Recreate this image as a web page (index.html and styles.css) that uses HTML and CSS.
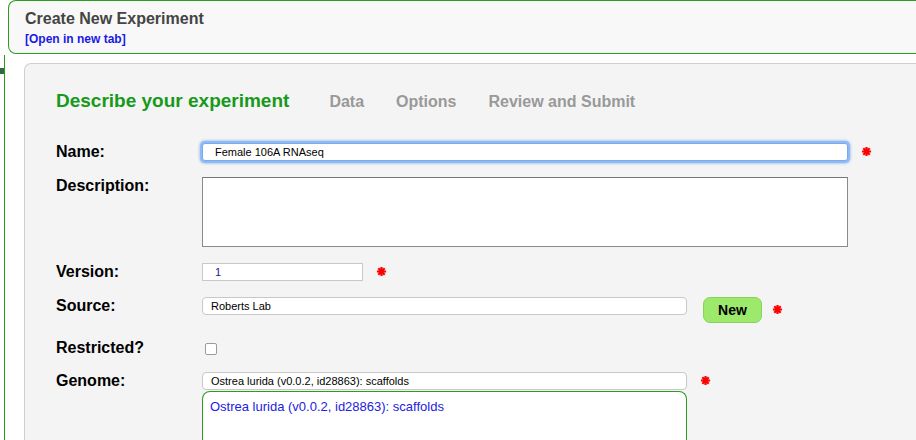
FILE: index.html
```html
<!DOCTYPE html>
<html lang="en">
<head>
    <meta charset="UTF-8">
    <meta name="viewport" content="width=device-width, initial-scale=1.0">
    <title>Create New Experiment</title>
    <link rel="stylesheet" href="styles.css">
</head>
<body>
    <div class="cabecalho">
        <h1>Create New Experiment</h1>
        <a href="#" class="cabecalho_link">[Open in new tab]</a>
    </div>

    <div class="moldura">
        <span class="moldura_marca"></span>
        <div class="painel">
            <div class="passos">
                <span class="passos_ativo">Describe your experiment</span>
                <span class="passos_item">Data</span>
                <span class="passos_item">Options</span>
                <span class="passos_item">Review and Submit</span>
            </div>

            <div class="campo">
                <label class="campo_rotulo">Name:</label>
                <input type="text" class="campo_texto campo_texto-foco campo_texto-largo recuo" value="Female 106A RNAseq">
                <svg class="obrigatorio" viewBox="0 0 12 12"><path d="M6 1v10M1 6h10M2.5 2.5l7 7M9.5 2.5l-7 7"/></svg>
            </div>
            <div class="campo campo-area">
                <label class="campo_rotulo">Description:</label>
                <textarea class="campo_area"></textarea>
            </div>
            <div class="campo">
                <label class="campo_rotulo">Version:</label>
                <input type="text" class="campo_texto campo_texto-curto recuo campo_texto-azul" value="1">
                <svg class="obrigatorio" viewBox="0 0 12 12"><path d="M6 1v10M1 6h10M2.5 2.5l7 7M9.5 2.5l-7 7"/></svg>
            </div>
            <div class="campo campo-botao">
                <label class="campo_rotulo">Source:</label>
                <input type="text" class="campo_texto campo_texto-medio redondo" value="Roberts Lab">
                <button class="botao_novo">New</button>
                <svg class="obrigatorio obrigatorio-perto" viewBox="0 0 12 12"><path d="M6 1v10M1 6h10M2.5 2.5l7 7M9.5 2.5l-7 7"/></svg>
            </div>
            <div class="campo campo-check">
                <label class="campo_rotulo">Restricted?</label>
                <span class="caixa"></span>
            </div>
            <div class="campo campo-genoma">
                <label class="campo_rotulo">Genome:</label>
                <div class="genoma">
                    <div class="genoma_linha">
                        <input type="text" class="campo_texto campo_texto-medio redondo" value="Ostrea lurida (v0.0.2, id28863): scaffolds">
                        <svg class="obrigatorio" viewBox="0 0 12 12"><path d="M6 1v10M1 6h10M2.5 2.5l7 7M9.5 2.5l-7 7"/></svg>
                    </div>
                    <div class="genoma_lista">Ostrea lurida (v0.0.2, id28863): scaffolds</div>
                </div>
            </div>
        </div>
    </div>
</body>
</html>
```

FILE: styles.css
```css
*{border: 0;margin: 0;padding: 0;box-sizing: border-box;}
html, body{
    width: 916px;
    height: 440px;
    overflow: hidden;
}
body{
    background: #fff;
    font-family: 'Liberation Sans', Arial, sans-serif;
}
.cabecalho{
    margin-left: 8px;
    height: 54px;
    border: 1px solid #2a9d1f;
    border-right: 0;
    border-radius: 8px 0 0 8px;
    background: #f8f8f8;
    padding: 8px 0 0 16px;
}
h1{
    font-size: 16px;
    line-height: 20px;
    color: #444;
    font-weight: bold;
}
.cabecalho_link{
    display: block;
    margin-top: 3px;
    font-size: 12px;
    line-height: 14px;
    font-weight: bold;
    color: #1a1ae6;
    text-decoration: none;
}
.moldura{
    position: relative;
    margin-top: 1px;
    margin-left: 4px;
    border-left: 1px solid #2a9d1f;
    height: 385px;
    padding: 8px 0 0 19px;
}
.moldura_marca{
    position: absolute;
    left: -5px;
    top: 13px;
    width: 4px;
    height: 6px;
    background: #2e6a3a;
}
.painel{
    height: 377px;
    border: 1px solid #cfcfcf;
    border-right: 0;
    border-bottom: 0;
    border-radius: 7px 0 0 0;
    background: #f4f4f4;
    padding: 26px 0 0 31px;
}
.passos{
    display: flex;
    align-items: baseline;
    height: 22px;
    margin-bottom: 31px;
}
.passos_ativo{
    font-size: 19px;
    font-weight: bold;
    color: #17991a;
    margin-right: 40px;
}
.passos_item{
    font-size: 16px;
    font-weight: bold;
    color: #999;
    margin-right: 32px;
}
.campo{
    display: flex;
    align-items: center;
    height: 18px;
    margin-bottom: 16px;
}
.campo-area{
    height: 70px;
    align-items: flex-start;
}
.campo-botao{
    height: 26px;
    align-items: flex-start;
}
.campo-check{
    margin-bottom: 15px;
}
.campo-genoma{
    align-items: flex-start;
    height: auto;
    margin-bottom: 0;
}
.campo_rotulo{
    width: 146px;
    flex: none;
    font-size: 16px;
    line-height: 18px;
    font-weight: bold;
    color: #000;
}
.campo_texto{
    height: 18px;
    border: 1px solid #c8c8c8;
    background: #fff;
    font-family: 'Liberation Sans', Arial, sans-serif;
    font-size: 11px;
    color: #000;
    padding: 0 8px;
    outline: 0;
}
.campo_texto-foco{
    border-color: #7aaaee;
    border-radius: 3px;
    box-shadow: 0 0 0 2px #8fbaf3, 0 0 2px 3px rgba(120, 170, 240, 0.5);
}
.campo_texto-largo{width: 646px;}
.campo_texto-curto{width: 161px;}
.campo_texto-medio{width: 485px;}
.campo_texto-azul{color: #1a1a80;}
.recuo{padding-left: 12px;}
.redondo{border-radius: 4px;}
.campo_area{
    width: 646px;
    height: 70px;
    border: 1px solid #8a8a8a;
    border-top-color: #777;
    background: #fff;
    resize: none;
    outline: 0;
}
.obrigatorio{
    width: 11px;
    height: 11px;
    margin-left: 13px;
    margin-top: -2px;
    stroke: #f00;
    stroke-width: 2.4;
    fill: none;
}
.campo-botao .obrigatorio{margin-top: 7px;}
.obrigatorio-perto{margin-left: 10px;}
.botao_novo{
    width: 59px;
    height: 26px;
    margin-left: 16px;
    border: 1px solid #86d45a;
    border-radius: 7px;
    background: #9de96b;
    font-family: 'Liberation Sans', Arial, sans-serif;
    font-size: 14px;
    font-weight: bold;
    color: #000;
}
.caixa{
    width: 12px;
    height: 12px;
    margin-left: 3px;
    margin-top: 1px;
    border: 1px solid #9a9a9a;
    border-radius: 2px;
    background: #fff;
}
.genoma_linha{
    display: flex;
    align-items: center;
}
.genoma_lista{
    width: 485px;
    height: 49px;
    margin-top: 1px;
    border: 1px solid #2a9d1f;
    border-bottom: 0;
    border-radius: 8px 8px 0 0;
    background: #fff;
    padding: 7px 0 0 7px;
    font-size: 13px;
    color: #2222e0;
}
```
